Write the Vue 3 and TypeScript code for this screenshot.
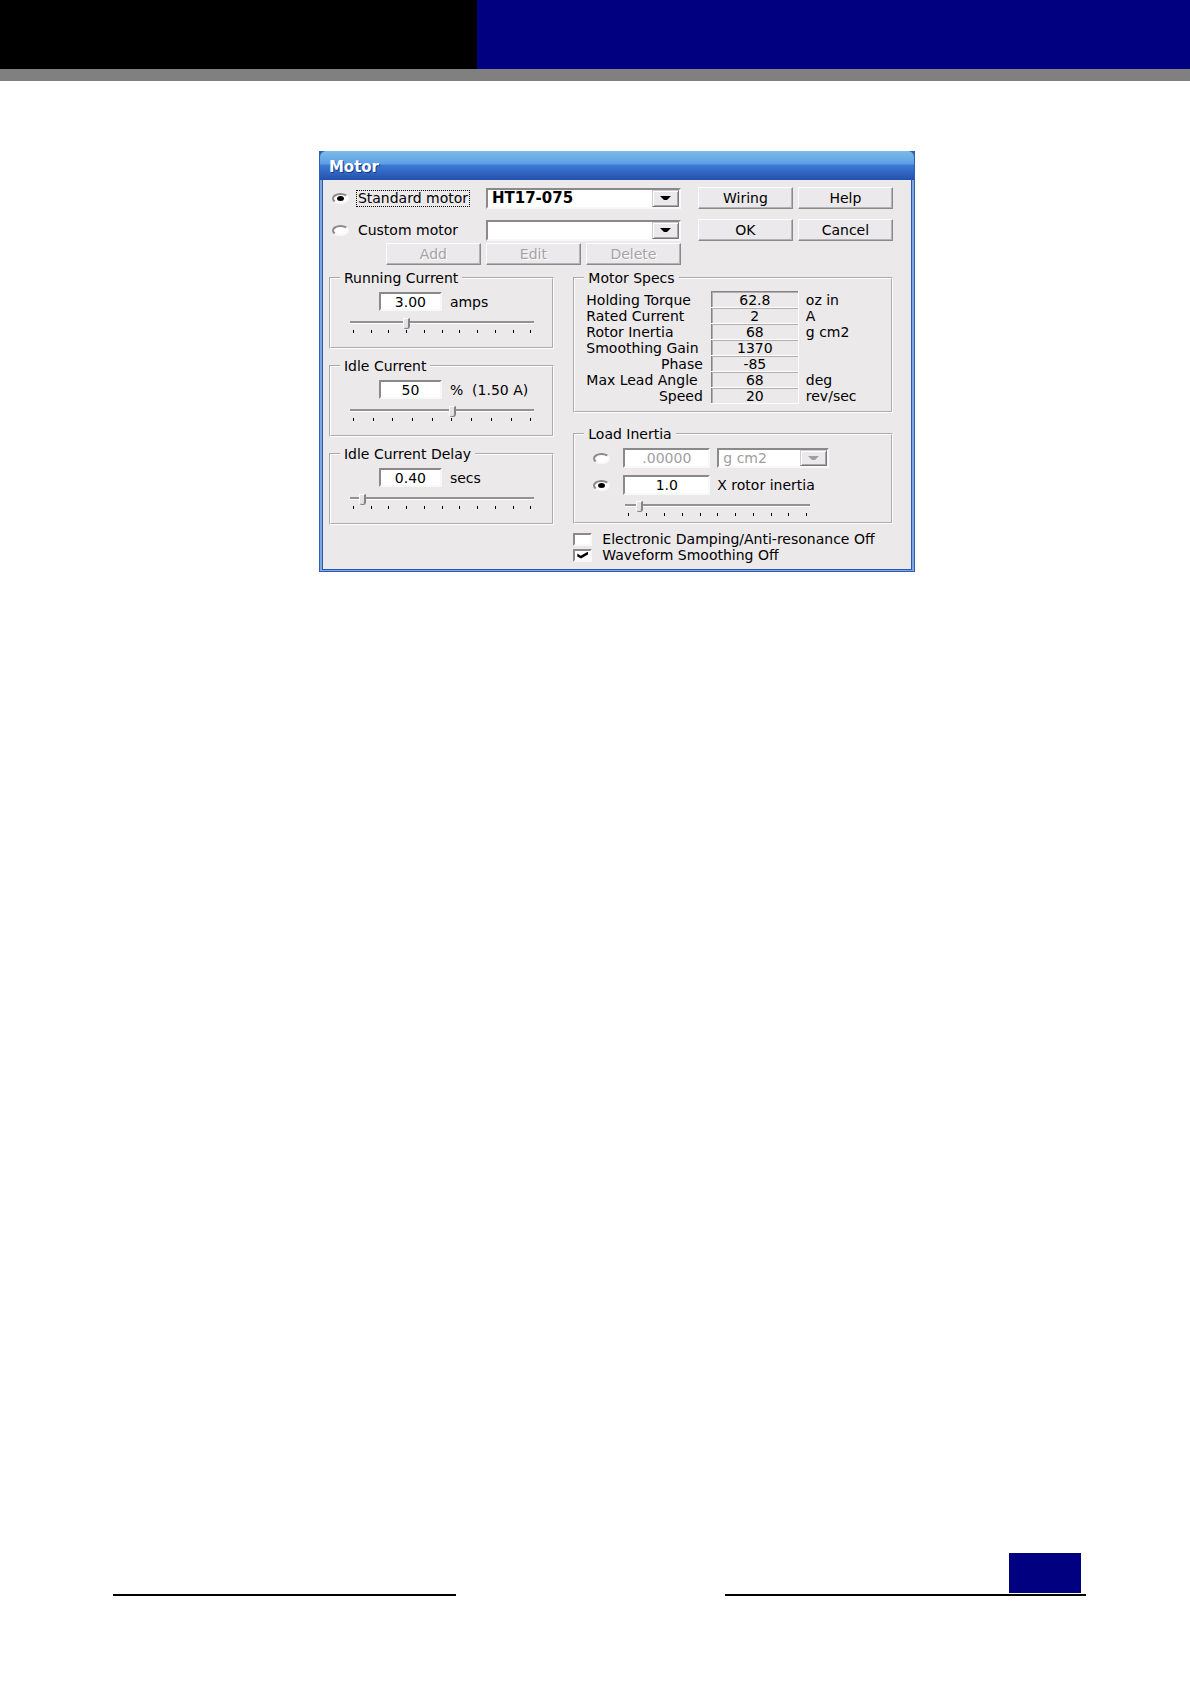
<script setup lang="ts">
import { ref } from 'vue'

interface CurrentGroup {
  id: string
  title: string
  value: string
  unit: string
  position: number
  ticks: number
}

interface Spec {
  label: string
  value: string
  unit: string
  right?: boolean
}

const motorKind = ref('standard')
const inertiaKind = ref('ratio')
const loadPosition = ref(6)
const damping = ref(false)
const smoothing = ref(true)

const groups = ref<CurrentGroup[]>([
  { id: 'running', title: 'Running Current', value: '3.00', unit: 'amps', position: 30, ticks: 11 },
  { id: 'idle', title: 'Idle Current', value: '50', unit: '%\u00a0 (1.50 A)', position: 56, ticks: 10 },
  { id: 'delay', title: 'Idle Current Delay', value: '0.40', unit: 'secs', position: 5, ticks: 11 },
])

const specs: Spec[] = [
  { label: 'Holding Torque', value: '62.8', unit: 'oz in' },
  { label: 'Rated Current', value: '2', unit: 'A' },
  { label: 'Rotor Inertia', value: '68', unit: 'g cm2' },
  { label: 'Smoothing Gain', value: '1370', unit: '' },
  { label: 'Phase', value: '-85', unit: '', right: true },
  { label: 'Max Lead Angle', value: '68', unit: 'deg' },
  { label: 'Speed', value: '20', unit: 'rev/sec', right: true },
]
</script>

<template>
  <div class="page">
    <header class="banner">
      <div class="banner-dark"></div>
      <div class="banner-blue"></div>
    </header>

    <section class="dialog" aria-labelledby="dialog-title">
      <h1 id="dialog-title" class="title">Motor</h1>
      <div class="body">
        <div class="top">
          <div class="pickers">
            <div class="picker">
              <input id="standard" v-model="motorKind" class="radio" type="radio" name="motor" value="standard" />
              <label for="standard" class="picker-label"><span class="focused">Standard motor</span></label>
              <div class="combo">
                <select class="strong" aria-label="Standard motor model">
                  <option>HT17-075</option>
                </select>
                <span class="drop"><svg width="11" height="4" viewBox="0 0 11 4"><path d="M0 0H11L7 4H4Z" fill="currentColor" /></svg></span>
              </div>
            </div>
            <div class="picker">
              <input id="custom" v-model="motorKind" class="radio" type="radio" name="motor" value="custom" />
              <label for="custom" class="picker-label"><span class="plain">Custom motor</span></label>
              <div class="combo">
                <select aria-label="Custom motor model">
                  <option></option>
                </select>
                <span class="drop"><svg width="11" height="4" viewBox="0 0 11 4"><path d="M0 0H11L7 4H4Z" fill="currentColor" /></svg></span>
              </div>
            </div>
            <div class="edit-row">
              <button type="button" disabled>Add</button>
              <button type="button" disabled>Edit</button>
              <button type="button" disabled>Delete</button>
            </div>
          </div>
          <div class="actions">
            <button type="button">Wiring</button>
            <button type="button">Help</button>
            <button type="button">OK</button>
            <button type="button">Cancel</button>
          </div>
        </div>

        <div class="columns">
          <div class="left">
            <fieldset v-for="g in groups" :key="g.id">
              <legend>{{ g.title }}</legend>
              <div class="current">
                <div class="entry">
                  <input :id="g.id" v-model="g.value" class="field" type="text" />
                  <label :for="g.id">{{ g.unit }}</label>
                </div>
                <input v-model="g.position" class="slider" type="range" min="0" max="100" :aria-label="g.title" />
                <div class="ticks"><i v-for="n in g.ticks" :key="n"></i></div>
              </div>
            </fieldset>
          </div>

          <div class="right">
            <fieldset>
              <legend>Motor Specs</legend>
              <div class="specs">
                <table>
                  <tbody>
                    <tr v-for="s in specs" :key="s.label">
                      <th scope="row" :class="{ end: s.right }">{{ s.label }}</th>
                      <td class="value">{{ s.value }}</td>
                      <td class="unit">{{ s.unit }}</td>
                    </tr>
                  </tbody>
                </table>
              </div>
            </fieldset>

            <fieldset class="load-group">
              <legend>Load Inertia</legend>
              <div class="load">
                <div class="load-row">
                  <input v-model="inertiaKind" class="radio" type="radio" name="inertia" value="fixed" aria-label="Fixed inertia" />
                  <input class="field" type="text" value=".00000" disabled aria-label="Inertia" />
                  <div class="combo small">
                    <select disabled aria-label="Inertia unit">
                      <option>g cm2</option>
                    </select>
                    <span class="drop"><svg width="11" height="4" viewBox="0 0 11 4"><path d="M0 0H11L7 4H4Z" fill="currentColor" /></svg></span>
                  </div>
                </div>
                <div class="load-row">
                  <input v-model="inertiaKind" class="radio" type="radio" name="inertia" value="ratio" aria-label="Rotor inertia ratio" />
                  <input id="ratio" class="field" type="text" value="1.0" />
                  <label for="ratio">X rotor inertia</label>
                </div>
                <div class="load-slider">
                  <input v-model="loadPosition" class="slider" type="range" min="0" max="100" aria-label="Load inertia" />
                  <div class="ticks"><i v-for="n in 11" :key="n"></i></div>
                </div>
              </div>
            </fieldset>

            <div class="checks">
              <label><input v-model="damping" type="checkbox" />Electronic Damping/Anti-resonance Off</label>
              <label><input v-model="smoothing" type="checkbox" />Waveform Smoothing Off</label>
            </div>
          </div>
        </div>
      </div>
    </section>

    <footer class="footer">
      <div class="rule rule-left"></div>
      <div class="rule-right">
        <div class="page-box"></div>
        <div class="rule"></div>
      </div>
    </footer>
  </div>
</template>

<style>
body {
  margin: 0;
  background: #fff;
}
</style>

<style scoped>
* {
  box-sizing: border-box;
}

.page {
  display: flex;
  flex-direction: column;
  min-height: 100vh;
  font: 14px/16px 'DejaVu Sans', Verdana, sans-serif;
  color: #000;
}

.banner {
  display: flex;
  height: 81px;
  border-bottom: 12px solid #808080;
}
.banner-dark {
  width: 40.1%;
  background: #000;
}
.banner-blue {
  flex: 1;
  background: #000080;
}

.dialog {
  width: 50%;
  min-width: 596px;
  margin: 70px 0 0 26.8%;
  padding: 0 1px 1px;
  background: #2f5db4;
}
.title {
  height: 29px;
  margin: 0;
  padding: 1px 9px 0;
  border-radius: 6px 6px 0 0;
  background: linear-gradient(#7bbcea 0, #5d9fe5 13px, #3c7bd3 14px, #2350ae 29px);
  color: #fff;
  font-size: 15px;
  line-height: 31px;
  text-shadow: 1px 1px 0 #123a86;
}
.body {
  padding: 7px 19px 7px 7px;
  background: #ece9eb;
  border: 2px solid #7ba9e0;
  border-top: 0;
  border-bottom-width: 1px;
  box-shadow: inset 1px 0 #2b57ae, inset -1px -1px #2b57ae;
}

.top {
  display: flex;
  justify-content: space-between;
  padding-left: 3px;
}
.pickers {
  width: 349px;
}
.picker {
  display: flex;
  align-items: center;
  height: 22px;
  margin-bottom: 10px;
}
.picker + .picker {
  margin-bottom: 2px;
}
.picker-label {
  flex: 1;
  margin-left: 7px;
  white-space: nowrap;
}
.focused,
.plain {
  display: inline-block;
  padding: 0 1px;
  border: 1px dotted #000;
  line-height: 15px;
}
.plain {
  border-color: transparent;
}
.edit-row {
  display: flex;
  justify-content: flex-end;
  gap: 5px;
}
.actions {
  display: grid;
  grid-template-columns: 95px 95px;
  grid-auto-rows: 22px;
  gap: 10px 5px;
}

button {
  width: 95px;
  height: 22px;
  padding: 0;
  background: #ebe9eb;
  border: 1px solid;
  border-color: #fff #8a8a8c #8a8a8c #fff;
  box-shadow: inset -1px -1px #b4b2b4;
  color: #000;
  font: inherit;
}
button:disabled {
  color: #a5a3a6;
  text-shadow: 1px 1px #fff;
}

.combo {
  position: relative;
  width: 195px;
  height: 21px;
}
.combo select {
  width: 100%;
  height: 100%;
  padding: 0 5px 0 4px;
  appearance: none;
  background: #fff;
  border: 2px solid;
  border-color: #8a8a8c #f8f8f8 #f8f8f8 #8a8a8c;
  border-radius: 0;
  color: #000;
  font: inherit;
  opacity: 1;
}
.combo .strong {
  font-size: 15px;
  font-weight: bold;
}
.drop {
  position: absolute;
  top: 2px;
  right: 2px;
  bottom: 2px;
  display: flex;
  align-items: center;
  justify-content: center;
  width: 27px;
  background: #ebe9eb;
  border: 1px solid;
  border-color: #d0ced0 #77777a #77777a #d0ced0;
  box-shadow: inset 1px 1px #fff, inset -1px -1px #a8a6a8;
  pointer-events: none;
}
.combo.small {
  width: 112px;
  height: 20px;
}
.combo.small select,
.combo.small .drop {
  color: #a09ea1;
}

.radio {
  display: flex;
  align-items: center;
  justify-content: center;
  flex: none;
  width: 17px;
  height: 11px;
  margin: 0;
  appearance: none;
  background: #fff;
  border: 2px solid;
  border-color: #8a8a8c #f8f8f8 #f8f8f8 #8a8a8c;
  border-radius: 50%;
}
.radio:checked::before {
  content: '';
  width: 7px;
  height: 5px;
  border-radius: 50%;
  background: #000;
}

.columns {
  display: grid;
  grid-template-columns: 225fr 319fr;
  gap: 19px;
  margin-top: 5px;
}
.left {
  display: flex;
  flex-direction: column;
  gap: 9px;
}
fieldset {
  min-width: 0;
  margin: 0;
  padding: 0;
  border: 2px groove #fff;
}
legend {
  margin-left: 9px;
  padding: 0 4px;
  line-height: 16px;
}
.current {
  padding: 6px 18px 14px 19px;
}
.entry {
  display: flex;
  align-items: center;
  gap: 8px;
  margin-left: 29px;
  white-space: nowrap;
}
.field {
  width: 63px;
  height: 19px;
  padding: 0;
  background: #fff;
  border: 2px solid;
  border-color: #8a8a8c #f8f8f8 #f8f8f8 #8a8a8c;
  color: #000;
  font: inherit;
  text-align: center;
}
.field:disabled {
  color: #a09ea1;
}

.slider {
  display: block;
  width: 100%;
  height: 12px;
  margin: 6px 0 1px;
  appearance: none;
  background: linear-gradient(#949295 2px, #fff 2px) 0 4px / 100% 3px no-repeat;
}
.slider::-webkit-slider-thumb {
  width: 7px;
  height: 11px;
  appearance: none;
  background: #e4e2e4;
  border: 1px solid;
  border-color: #fff #858387 #858387 #fff;
  border-right-width: 2px;
  border-radius: 0 0 3px 3px;
}
.ticks {
  display: flex;
  justify-content: space-between;
  height: 3px;
  padding: 0 3px;
}
.ticks i {
  width: 1px;
  background: #000;
}

.specs {
  padding: 5px 11px 7px;
}
table {
  width: 100%;
  border-collapse: collapse;
}
tr {
  height: 16px;
}
th,
td {
  padding: 0;
  line-height: 14px;
  white-space: nowrap;
}
th {
  width: 125px;
  font-weight: normal;
  text-align: left;
}
.end {
  padding-right: 8px;
  text-align: right;
}
.value {
  width: 87px;
  border: 1px solid;
  border-color: #858387 #fff #fff #858387;
  box-shadow: inset 1px 1px #b0aeb1;
  text-align: center;
}
.unit {
  padding-left: 7px;
}

.load-group {
  margin-top: 13px;
}
.load {
  padding: 6px 18px;
}
.load-row {
  display: flex;
  align-items: center;
  height: 20px;
  margin-bottom: 7px;
}
.load-row + .load-row {
  margin-bottom: 0;
}
.load-row .field {
  width: 87px;
  height: 20px;
  margin: 0 7px 0 13px;
}
.load-slider {
  width: 185px;
  margin-left: 32px;
}
.load-slider .slider {
  margin-top: 5px;
}

.checks {
  margin-top: 7px;
}
.checks label {
  display: flex;
  align-items: center;
  gap: 10px;
  height: 16px;
  white-space: nowrap;
}
.checks input {
  width: 19px;
  height: 13px;
  margin: 0;
  appearance: none;
  background: #fff;
  border: 2px solid;
  border-color: #8a8a8c #f8f8f8 #f8f8f8 #8a8a8c;
}
.checks input:checked::before {
  content: '';
  display: block;
  width: 11px;
  height: 7px;
  margin: 1px 0 0 2px;
  background: #000;
  clip-path: polygon(0 30%, 30% 62%, 100% 0, 100% 38%, 34% 100%, 0 70%);
}

.footer {
  display: flex;
  align-items: flex-end;
  justify-content: space-between;
  margin: auto 8.7% 88px 9.5%;
}
.rule {
  height: 2px;
  background: #000;
}
.rule-left {
  width: 35.2%;
}
.rule-right {
  width: 37.1%;
}
.page-box {
  width: 72px;
  height: 40px;
  margin: 0 5px 1px auto;
  background: #000080;
}
</style>
